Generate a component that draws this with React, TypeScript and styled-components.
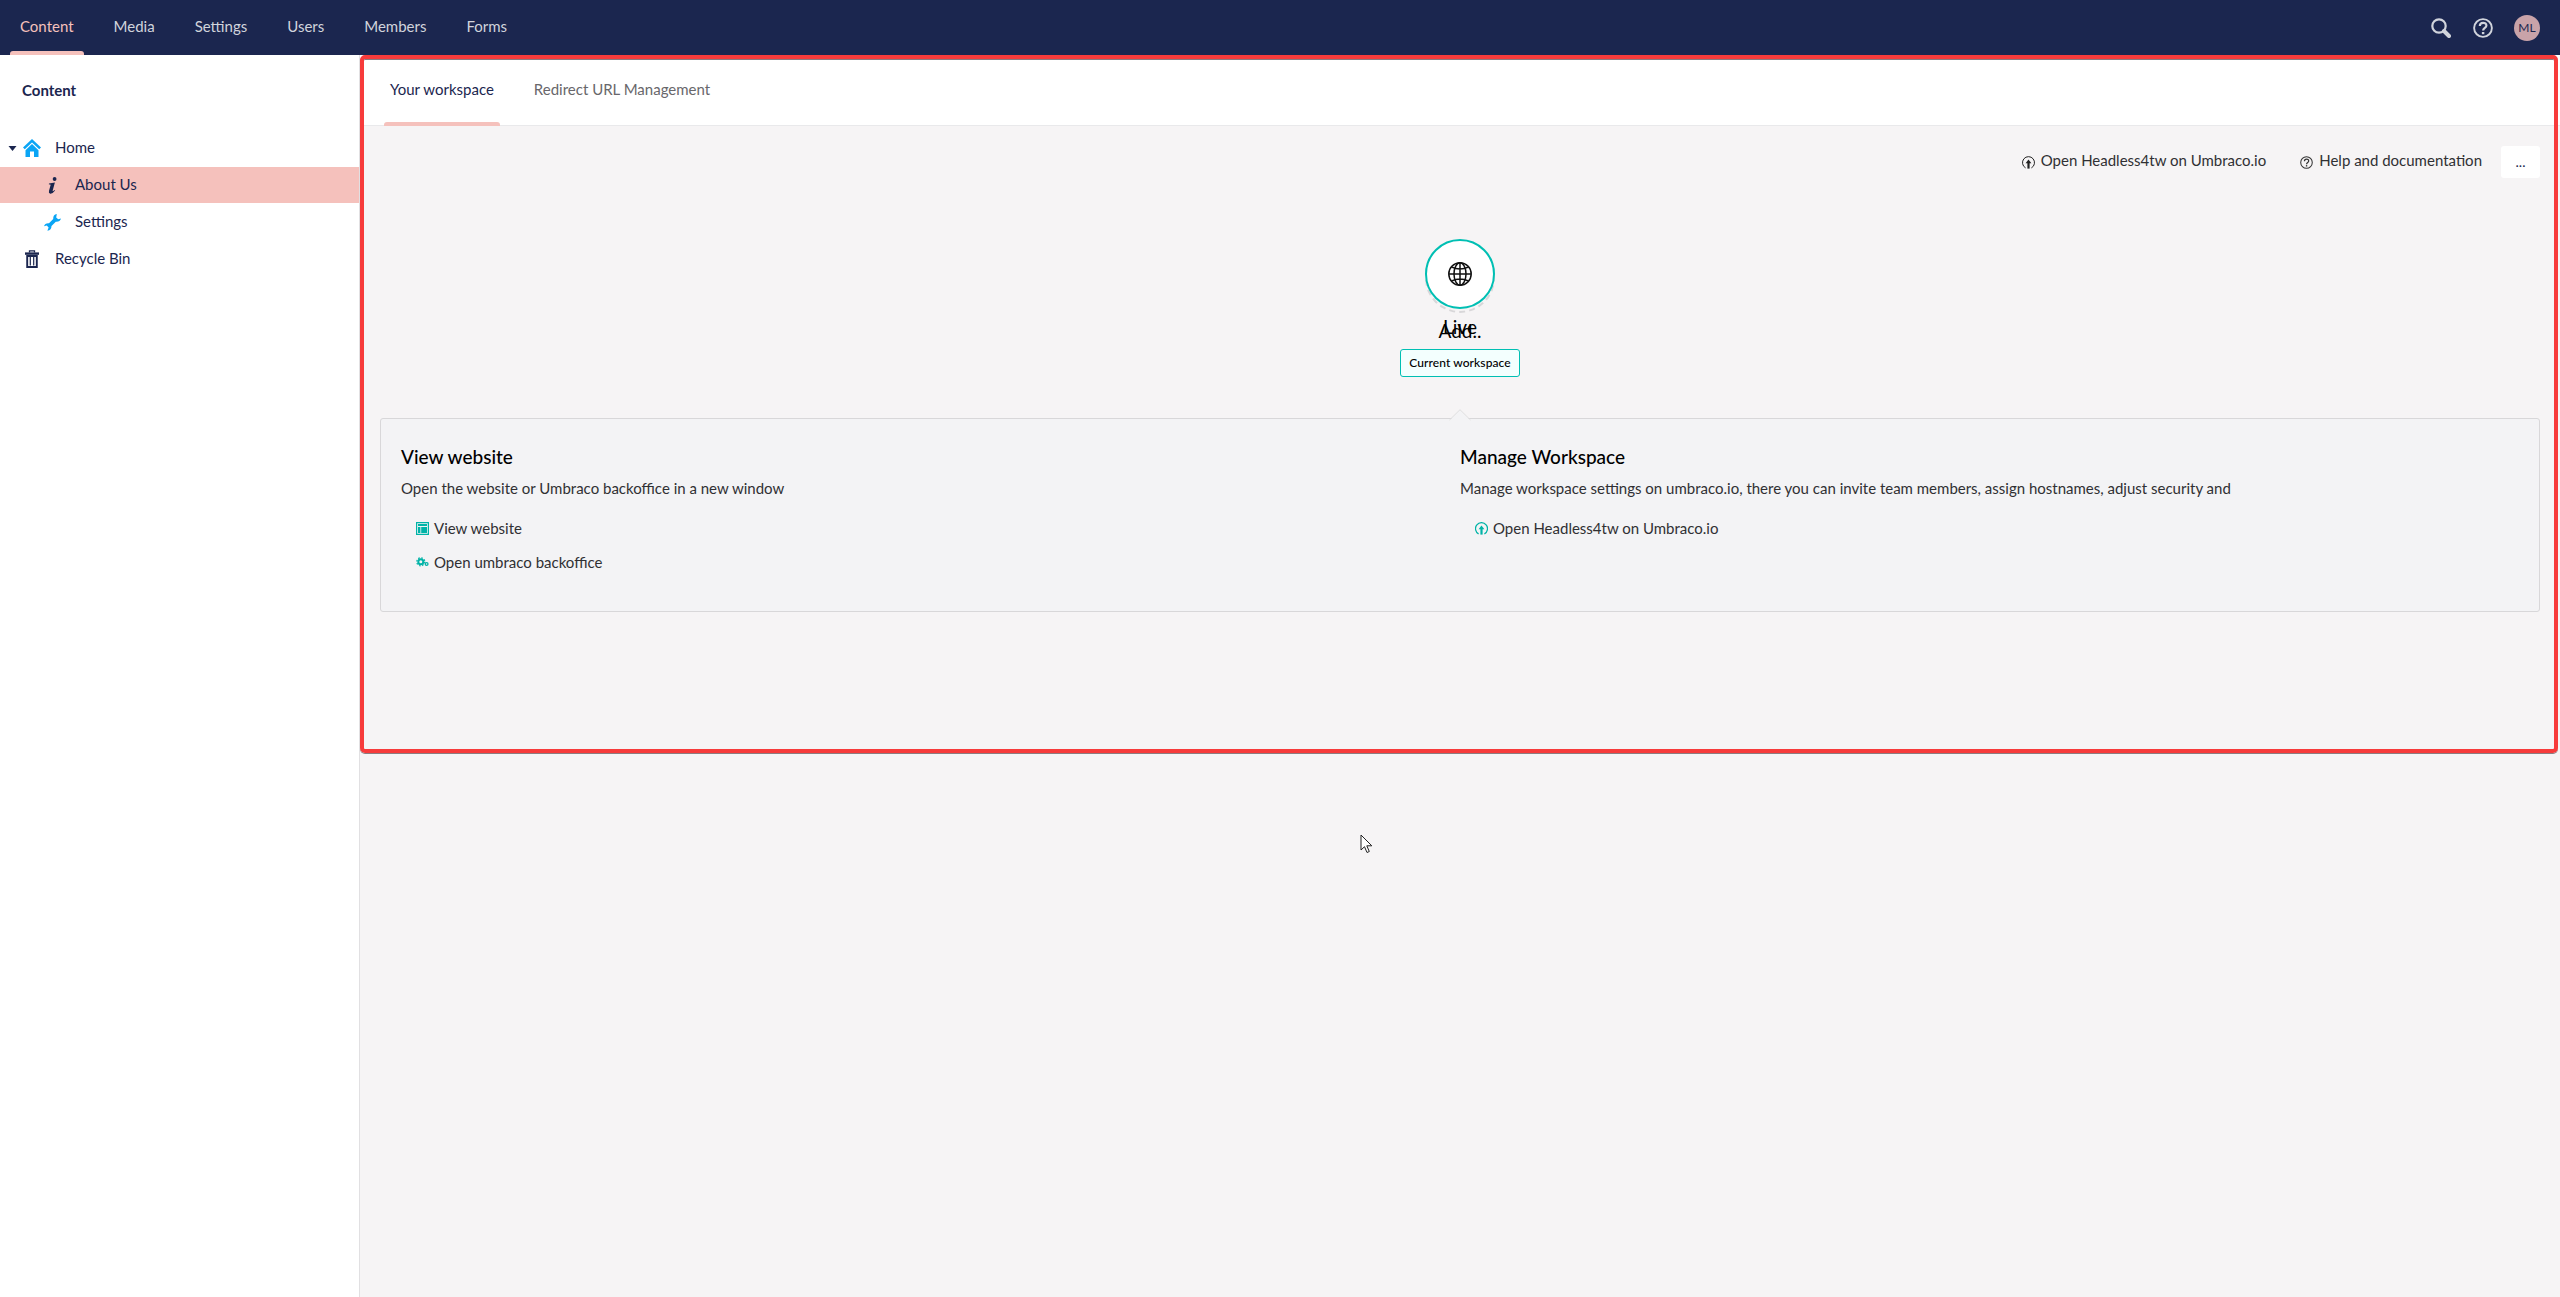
import React from "react";
import styled, { createGlobalStyle } from "styled-components";

const NAVY = "#1b264f";
const PINK = "#f5c1bc";
const TEAL = "#00bfb3";
const ICON_TEAL = "#00b3a7";
const BLUE = "#0aa5f5";

const GlobalStyle = createGlobalStyle`
  * { box-sizing: border-box; }
  body { margin: 0; background: #f6f4f5; font-family: Lato, "Liberation Sans", sans-serif; font-size: 15px; line-height: 20px; color: #303033; }
  h4, p, ul { margin: 0; padding: 0; }
  svg { display: block; flex: none; }
`;

const Page = styled.div`
  position: relative;
  display: flex;
  flex-direction: column;
  height: 1297px;
  overflow: hidden;
`;

const Header = styled.header`
  display: flex;
  justify-content: space-between;
  height: 55px;
  flex: none;
  padding: 0 20px 0 10px;
  background: ${NAVY};
`;

const Nav = styled.nav`
  display: flex;
  gap: 20px;
`;

const NavItem = styled.a<{ $active?: boolean }>`
  display: flex;
  flex-direction: column;
  justify-content: space-between;
  padding-top: 16px;
  color: ${(p) => (p.$active ? PINK : "#d1d4dc")};
  &::after {
    content: "";
    height: 4px;
    border-radius: 3px 3px 0 0;
    background: ${(p) => (p.$active ? PINK : "transparent")};
  }
`;

const NavLabel = styled.span`
  padding: 0 10px;
`;

const Tools = styled.div`
  display: flex;
  align-items: center;
  padding-top: 1px;
`;

const SearchSlot = styled.span`
  margin-right: 22px;
`;

const HelpSlot = styled.span`
  margin-right: 21px;
`;

const Avatar = styled.span`
  width: 26px;
  height: 26px;
  border-radius: 50%;
  background: #c9a3a9;
  color: ${NAVY};
  font-size: 12px;
  line-height: 25px;
  text-align: center;
`;

const Body = styled.div`
  display: flex;
  flex: 1;
`;

const Sidebar = styled.aside`
  width: 360px;
  flex: none;
  background: #fff;
  border-right: 1px solid #e1e0e2;
`;

const SidebarTitle = styled.div`
  height: 75px;
  padding: 25px 0 0 22px;
  color: ${NAVY};
  font-weight: 700;
`;

const TreeRow = styled.div<{ $active?: boolean; $child?: boolean }>`
  display: flex;
  align-items: center;
  height: 36px;
  margin-bottom: 1px;
  padding-left: ${(p) => (p.$child ? 28 : 8)}px;
  background: ${(p) => (p.$active ? PINK : "transparent")};
  color: ${NAVY};
`;

const TreeLabel = styled.span`
  padding-bottom: 2px;
`;

const Caret = styled.span`
  width: 14px;
`;

const TreeIcon = styled.span`
  display: flex;
  justify-content: center;
  width: 20px;
  margin-right: 13px;
`;

const Main = styled.main`
  flex: 1;
  min-width: 0;
`;

const Tabs = styled.div`
  display: flex;
  gap: 28px;
  height: 71px;
  padding-left: 24px;
  background: #fff;
  box-shadow: inset 0 -1px #e9e9eb;
`;

const Tab = styled.a<{ $active?: boolean }>`
  display: flex;
  flex-direction: column;
  justify-content: space-between;
  padding-top: 24px;
  color: ${(p) => (p.$active ? NAVY : "#68676b")};
  &::after {
    content: "";
    height: 4px;
    border-radius: 3px 3px 0 0;
    background: ${(p) => (p.$active ? PINK : "transparent")};
  }
`;

const TabLabel = styled.span`
  padding: 0 6px;
`;

const Dashboard = styled.section`
  padding: 20px 20px 0;
`;

const Actions = styled.div`
  display: flex;
  justify-content: flex-end;
  height: 32px;
`;

const Action = styled.a<{ $gap: number }>`
  display: flex;
  align-items: center;
  gap: 6px;
  height: 28px;
  margin-right: ${(p) => p.$gap}px;
  & > svg { margin-top: 5px; }
`;

const MoreButton = styled.button`
  width: 39px;
  height: 32px;
  padding: 0;
  border: 0;
  border-radius: 3px;
  background: #fff;
  color: ${NAVY};
  font: 14px/30px Lato, sans-serif;
`;

const Stage = styled.div`
  display: flex;
  flex-direction: column;
  align-items: center;
  height: 240px;
  padding-top: 61px;
`;

const CircleStack = styled.div`
  position: relative;
  width: 70px;
  height: 70px;
`;

const DashedCircle = styled.div`
  position: absolute;
  inset: 4px 0 -4px 0;
  border: 2px dashed #d8d7d9;
  border-radius: 50%;
`;

const LiveCircle = styled.div`
  position: absolute;
  inset: 0;
  display: flex;
  align-items: center;
  justify-content: center;
  border: 2px solid ${TEAL};
  border-radius: 50%;
  background: #fff;
`;

const NameStack = styled.div`
  display: grid;
  justify-items: center;
  height: 40px;
  padding-top: 6px;
  color: #000;
  font-size: 19px;
  line-height: 24px;
`;

const StackedName = styled.span<{ $drop?: number }>`
  grid-area: 1 / 1;
  padding-top: ${(p) => p.$drop ?? 0}px;
`;

const Badge = styled.span`
  width: 120px;
  height: 28px;
  border: 1px solid ${TEAL};
  border-radius: 3px;
  background: #f3fffe;
  color: #000;
  font-family: "Lato Medium", Lato, sans-serif;
  font-size: 12px;
  font-weight: 500;
  letter-spacing: 0.08px;
  line-height: 25px;
  text-align: center;
`;

const Panel = styled.div`
  position: relative;
  display: grid;
  grid-template-columns: 1fr 1fr;
  height: 194px;
  padding: 26px 20px 0;
  border: 1px solid #d8d7d9;
  border-radius: 3px;
  background: #f3f3f5;
`;

const Pointer = styled.svg`
  position: absolute;
  left: 50%;
  top: -10px;
  margin-left: -11px;
`;

const Column = styled.div``;

const Heading = styled.h4`
  color: #000;
  font-family: "Lato Medium", Lato, sans-serif;
  font-size: 19px;
  font-weight: 500;
  line-height: 24px;
  margin-bottom: 9px;
`;

const Text = styled.p`
  margin-bottom: 20px;
`;

const LinkRow = styled.a`
  display: flex;
  align-items: center;
  gap: 5px;
  height: 20px;
  margin-bottom: 14px;
  padding-left: 15px;
`;

const LinkIcon = styled.span`
  margin-top: 1px;
`;

const Highlight = styled.div`
  position: absolute;
  left: 360px;
  top: 55px;
  width: 2198px;
  height: 698px;
  border: 4px solid #f73b3b;
  border-radius: 5px;
  box-shadow: inset 0 1px #8c7c80, 0 1px #8c7c80;
`;

const Cursor = styled.svg`
  position: absolute;
  left: 1360px;
  top: 834px;
`;

const SearchIcon = () => (
  <svg width="20" height="20" viewBox="0 0 20 20" fill="none" stroke="#d1d4dc">
    <circle cx="8" cy="8" r="6.7" strokeWidth="2.2" />
    <path d="M13 13 L18 18" strokeWidth="4" strokeLinecap="round" />
  </svg>
);

const HelpIcon = ({ size, color, weight }: { size: number; color: string; weight: number }) => (
  <svg width={size} height={size} viewBox="0 0 20 20" fill="none" stroke={color} strokeWidth={weight}>
    <circle cx="10" cy="10" r="8.9" />
    <path d="M6.8 8 C6.8 3.8 13.4 3.8 13.4 7.6 C13.4 10 10.1 9.9 10.1 12.6" strokeWidth={weight * 1.15} />
    <path d="M10.1 14 V16.2" strokeWidth={weight * 1.3} />
  </svg>
);

const HomeIcon = () => (
  <svg width="18" height="18" viewBox="0 0 18 18" fill={BLUE}>
    <path d="M9 0 L18 8.6 L16.2 10.3 L9 3.4 L1.8 10.3 L0 8.6 Z" />
    <path d="M9 5 L15.5 11.2 V18 H11 V12.6 H7 V18 H2.5 V11.2 Z" />
  </svg>
);

const InfoIcon = () => (
  <svg width="9" height="17" viewBox="0 0 9 17" fill={NAVY}>
    <circle cx="6.6" cy="2" r="1.9" />
    <path d="M1 6.6 L6.9 5.4 L4.7 13.6 Q4.5 14.9 6.8 13 L7.1 13.6 Q4.6 17 2.2 16.7 Q0.3 16.3 1 13.8 L2.7 7.8 L0.8 7.3 Z" />
  </svg>
);

const WrenchIcon = () => (
  <svg width="17" height="17" viewBox="0 0 17 17" fill={BLUE}>
    <path d="M12.8 0 Q9 .6 9.2 5 L5 9.2 Q1 8.8 0 12.2 L2.8 11.6 L4.6 13.6 L3.4 16.8 Q7.6 16.2 7.5 12 L11.8 7.8 Q15.8 8.2 17 4.6 L14.2 5.2 L12.2 3.4 Z" />
  </svg>
);

const TrashIcon = () => (
  <svg width="14" height="18" viewBox="0 0 14 18" fill="none" stroke={NAVY}>
    <path d="M4.5 2.5 V.9 H9.5 V2.5" strokeWidth="1.3" />
    <path d="M0 3.6 H14" strokeWidth="2.4" />
    <path d="M2.2 6 H11.8 V17 H2.2 Z" strokeWidth="1.9" />
    <path d="M5.3 7 V15.5 M8.7 7 V15.5" strokeWidth="1.2" />
  </svg>
);

const UploadCircleIcon = ({ color, weight }: { color: string; weight: number }) => (
  <svg width="13" height="13" viewBox="0 0 13 13" fill="none" stroke={color}>
    <path d="M3.6 11.9 A6 6 0 1 1 9.4 11.9" strokeWidth={weight} />
    <path d="M6.5 12.6 V6" strokeWidth="2.2" />
    <path d="M6.5 3.4 L9.4 7.3 H3.6 Z" fill={color} stroke="none" />
  </svg>
);

const WindowIcon = () => (
  <svg width="13" height="13" viewBox="0 0 13 13" fill={ICON_TEAL}>
    <path fillRule="evenodd" d="M0 0 H13 V13 H0 Z M1.2 1.2 V11.8 H11.8 V1.2 Z" />
    <path d="M2 2 H11 V4 H2 Z M2 5 H4.4 V11 H2 Z M5.2 5 H11 V11 H5.2 Z" />
  </svg>
);

const GearsIcon = () => (
  <svg width="13" height="11" viewBox="0 0 13 11" fill="none" stroke={ICON_TEAL}>
    <circle cx="4.8" cy="4.8" r="2.5" strokeWidth="2" />
    <circle cx="4.8" cy="4.8" r="4" strokeWidth="1.2" strokeDasharray="1.6 1.54" />
    <circle cx="10.6" cy="7" r="1.4" strokeWidth="1.3" />
  </svg>
);

const GlobeIcon = () => (
  <svg width="24" height="24" viewBox="0 0 24 24" fill="none" stroke="#111" strokeWidth="1.5">
    <circle cx="12" cy="12" r="11.2" />
    <ellipse cx="12" cy="12" rx="6" ry="11.2" />
    <path d="M12 1 V23 M1 12 H23 M3.6 5 Q12 9 20.4 5 M3.6 19 Q12 15 20.4 19" />
  </svg>
);

const navItems = ["Content", "Media", "Settings", "Users", "Members", "Forms"];

export default function App() {
  return (
    <Page>
      <GlobalStyle />
      <Header>
        <Nav>
          {navItems.map((label, i) => (
            <NavItem key={label} $active={i === 0}>
              <NavLabel>{label}</NavLabel>
            </NavItem>
          ))}
        </Nav>
        <Tools>
          <SearchSlot><SearchIcon /></SearchSlot>
          <HelpSlot><HelpIcon size={20} color="#d1d4dc" weight={1.9} /></HelpSlot>
          <Avatar>ML</Avatar>
        </Tools>
      </Header>
      <Body>
        <Sidebar>
          <SidebarTitle>Content</SidebarTitle>
          <TreeRow>
            <Caret>
              <svg width="9" height="5" viewBox="0 0 9 5" fill={NAVY}><path d="M0.5 0 H8.5 L4.5 5 Z" /></svg>
            </Caret>
            <TreeIcon><HomeIcon /></TreeIcon>
            <TreeLabel>Home</TreeLabel>
          </TreeRow>
          <TreeRow $active $child>
            <Caret />
            <TreeIcon><InfoIcon /></TreeIcon>
            <TreeLabel>About Us</TreeLabel>
          </TreeRow>
          <TreeRow $child>
            <Caret />
            <TreeIcon><WrenchIcon /></TreeIcon>
            <TreeLabel>Settings</TreeLabel>
          </TreeRow>
          <TreeRow>
            <Caret />
            <TreeIcon><TrashIcon /></TreeIcon>
            <TreeLabel>Recycle Bin</TreeLabel>
          </TreeRow>
        </Sidebar>
        <Main>
          <Tabs>
            <Tab $active><TabLabel>Your workspace</TabLabel></Tab>
            <Tab><TabLabel>Redirect URL Management</TabLabel></Tab>
          </Tabs>
          <Dashboard>
            <Actions>
              <Action $gap={34}>
                <UploadCircleIcon color="#222" weight={1} />
                Open Headless4tw on Umbraco.io
              </Action>
              <Action $gap={19}>
                <HelpIcon size={13} color="#333" weight={1.6} />
                Help and documentation
              </Action>
              <MoreButton>...</MoreButton>
            </Actions>
            <Stage>
              <CircleStack>
                <DashedCircle />
                <LiveCircle><GlobeIcon /></LiveCircle>
              </CircleStack>
              <NameStack>
                <StackedName>Live</StackedName>
                <StackedName $drop={4}>Add..</StackedName>
              </NameStack>
              <Badge>Current workspace</Badge>
            </Stage>
            <Panel>
              <Pointer width="22" height="12" viewBox="0 0 22 12">
                <path d="M1 11 L11 1 L21 11 V12 H1 Z" fill="#f3f3f5" />
                <path d="M0.5 11 L11 0.7 L21.5 11" fill="none" stroke="#dededf" />
              </Pointer>
              <Column>
                <Heading>View website</Heading>
                <Text>Open the website or Umbraco backoffice in a new window</Text>
                <LinkRow><LinkIcon><WindowIcon /></LinkIcon>View website</LinkRow>
                <LinkRow><LinkIcon><GearsIcon /></LinkIcon>Open umbraco backoffice</LinkRow>
              </Column>
              <Column>
                <Heading>Manage Workspace</Heading>
                <Text>Manage workspace settings on umbraco.io, there you can invite team members, assign hostnames, adjust security and</Text>
                <LinkRow><LinkIcon><UploadCircleIcon color={ICON_TEAL} weight={1.3} /></LinkIcon>Open Headless4tw on Umbraco.io</LinkRow>
              </Column>
            </Panel>
          </Dashboard>
        </Main>
      </Body>
      <Highlight />
      <Cursor width="13" height="20" viewBox="0 0 13 20">
        <path d="M1 1 V16 L4.5 12.7 L7 18.5 L9.3 17.5 L6.8 11.8 H11.8 Z" fill="#fff" stroke="#222" />
      </Cursor>
    </Page>
  );
}
